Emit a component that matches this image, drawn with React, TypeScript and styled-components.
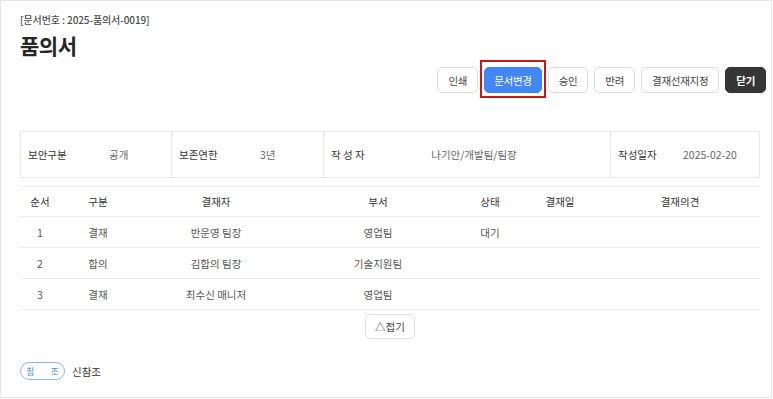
import { FC } from "react";
import styled, { createGlobalStyle } from "styled-components";

const GlobalStyle = createGlobalStyle`
  * { box-sizing: border-box; }
  body {
    margin: 0;
    background: #fff;
    font-family: "Noto Sans CJK KR", "Noto Sans", sans-serif;
  }
`;

const Panel = styled.div`
  width: 772px;
  height: 398px;
  border: 1px solid #e6e6e6;
  padding: 11px 5px 0 19px;
  background: #fff;
`;

const DocNo = styled.p`
  margin: 0;
  font-size: 10px;
  line-height: 16px;
  font-weight: 500;
  color: #4a4a4a;
  letter-spacing: -0.1px;
`;

const Title = styled.h1`
  margin: 3px 0 0;
  font-size: 21px;
  line-height: 28px;
  font-weight: 700;
  color: #262626;
  letter-spacing: -0.5px;
`;

const Toolbar = styled.div`
  display: flex;
  justify-content: flex-end;
  gap: 6px;
  margin-top: 8px;
`;

const Button = styled.button<{ $variant?: "primary" | "dark" }>`
  position: relative;
  height: 26px;
  padding: 0 ${(p) => (p.$variant === "primary" ? "9px" : "10px")};
  min-width: 40px;
  border-radius: 5px;
  font-family: inherit;
  font-size: 10.5px;
  letter-spacing: -0.3px;
  cursor: pointer;
  border: 1px solid
    ${(p) =>
      p.$variant === "primary" ? "#3f83f0" : p.$variant === "dark" ? "#333" : "#dcdcdc"};
  background: ${(p) =>
    p.$variant === "primary" ? "#4287f5" : p.$variant === "dark" ? "#363636" : "#fff"};
  color: ${(p) => (p.$variant ? "#fff" : "#444")};
  font-weight: ${(p) => (p.$variant === "dark" ? 700 : 400)};
`;

const Highlight = styled.span`
  position: absolute;
  top: -8px;
  bottom: -6px;
  left: -5px;
  right: -5px;
  border: 2px solid #d0141c;
  pointer-events: none;
`;

const InfoBox = styled.div`
  display: grid;
  grid-template-columns: 150px 152px 287px 1fr;
  margin: 38px 6px 0 0;
  height: 47px;
  border: 1px solid #e8e8e8;
`;

const InfoCell = styled.div`
  display: flex;
  align-items: center;
  padding-left: 7px;
  font-size: 10.5px;
  & + & {
    border-left: 1px solid #e8e8e8;
  }
`;

const InfoLabel = styled.span<{ $width?: number }>`
  width: ${(p) => p.$width ?? 81}px;
  flex-shrink: 0;
  color: #333;
`;

const InfoValue = styled.span<{ $center?: boolean }>`
  flex: 1;
  color: #666;
  text-align: ${(p) => (p.$center ? "center" : "left")};
  padding-right: ${(p) => (p.$center ? "74px" : "0")};
`;

const Table = styled.table`
  width: 740px;
  margin-top: 8px;
  border-collapse: collapse;
  table-layout: fixed;
  border-top: 1px solid #ececec;
  font-size: 10.5px;

  th,
  td {
    height: 31px;
    padding: 0;
    text-align: center;
    border-bottom: 1px solid #ececec;
    font-weight: 400;
  }
  th {
    color: #333;
    height: 30px;
  }
  td {
    color: #555;
  }
`;

const FoldRow = styled.div`
  display: flex;
  justify-content: center;
  width: 740px;
  margin-top: 4px;
`;

const FoldButton = styled.button`
  width: 50px;
  height: 25px;
  border: 1px solid #dedede;
  border-radius: 5px;
  background: #fff;
  font-family: inherit;
  font-size: 10.5px;
  color: #444;
  padding: 0;
`;

const RefRow = styled.div`
  display: flex;
  align-items: center;
  gap: 7px;
  margin-top: 23px;
`;

const RefBadge = styled.span`
  width: 45px;
  height: 18px;
  border: 1px solid #8fb6dc;
  border-radius: 9px;
  display: flex;
  align-items: center;
  justify-content: center;
  gap: 16px;
  font-size: 9px;
  color: #5d8fc2;
`;

const RefName = styled.span`
  font-size: 10.5px;
  color: #333;
`;

const columns = [40, 76, 160, 164, 60, 80, 160];
const headers = ["순서", "구분", "결재자", "부서", "상태", "결재일", "결재의견"];
const rows = [
  ["1", "결재", "반운영 팀장", "영업팀", "대기", "", ""],
  ["2", "합의", "김합의 팀장", "기술지원팀", "", "", ""],
  ["3", "결재", "최수신 매니저", "영업팀", "", "", ""],
];

const App: FC = () => {
  return (
    <>
      <GlobalStyle />
      <Panel>
        <DocNo>[문서번호 : 2025-품의서-0019]</DocNo>
        <Title>품의서</Title>
        <Toolbar>
          <Button>인쇄</Button>
          <Button $variant="primary">
            문서변경
            <Highlight />
          </Button>
          <Button>승인</Button>
          <Button>반려</Button>
          <Button>결재선재지정</Button>
          <Button $variant="dark">닫기</Button>
        </Toolbar>

        <InfoBox>
          <InfoCell>
            <InfoLabel>보안구분</InfoLabel>
            <InfoValue>공개</InfoValue>
          </InfoCell>
          <InfoCell>
            <InfoLabel>보존연한</InfoLabel>
            <InfoValue>3년</InfoValue>
          </InfoCell>
          <InfoCell>
            <InfoLabel>작 성 자</InfoLabel>
            <InfoValue $center>나기안/개발팀/팀장</InfoValue>
          </InfoCell>
          <InfoCell>
            <InfoLabel $width={65}>작성일자</InfoLabel>
            <InfoValue>2025-02-20</InfoValue>
          </InfoCell>
        </InfoBox>

        <Table>
          <colgroup>
            {columns.map((w, i) => (
              <col key={i} style={{ width: w }} />
            ))}
          </colgroup>
          <thead>
            <tr>
              {headers.map((h) => (
                <th key={h}>{h}</th>
              ))}
            </tr>
          </thead>
          <tbody>
            {rows.map((r) => (
              <tr key={r[0]}>
                {r.map((c, i) => (
                  <td key={i}>{c}</td>
                ))}
              </tr>
            ))}
          </tbody>
        </Table>

        <FoldRow>
          <FoldButton>△접기</FoldButton>
        </FoldRow>

        <RefRow>
          <RefBadge>
            <span>참</span>
            <span>조</span>
          </RefBadge>
          <RefName>신참조</RefName>
        </RefRow>
      </Panel>
    </>
  );
};

export default App;
